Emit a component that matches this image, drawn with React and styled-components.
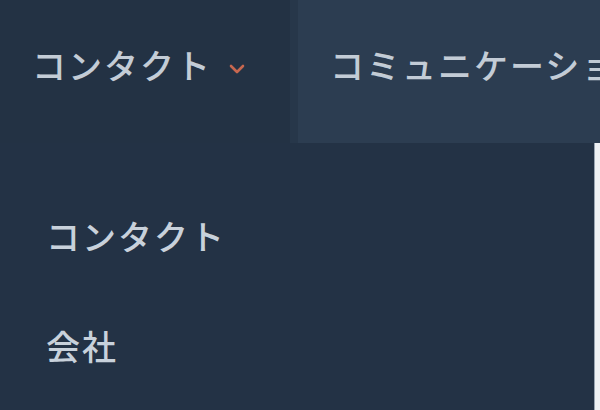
import React from "react";
import styled, { createGlobalStyle } from "styled-components";

const GlobalStyle = createGlobalStyle`
  html, body {
    margin: 0;
    padding: 0;
    background: #eef1f4;
    font-family: "Noto Sans CJK JP", "Noto Sans", sans-serif;
    overflow: hidden;
  }
`;

const StyledPage = styled.div`
  position: relative;
  width: 600px;
  height: 410px;
  overflow: hidden;
`;

const StyledNav = styled.nav`
  display: flex;
  flex-flow: row nowrap;
  width: 100%;
  height: 143px;
  background-color: #2c3d51;
`;

const StyledTab = styled.div`
  display: flex;
  flex-flow: row nowrap;
  align-items: center;
  flex-shrink: 0;
  box-sizing: border-box;
  height: 100%;
  padding: 0 ${props => (props.active ? "42px" : "0")} 14px ${props => (props.active ? "32px" : "32px")};
  background-color: ${props => (props.active ? "#233244" : "transparent")};
  border-left: ${props => (props.active ? "none" : "8px solid #27374a")};
  white-space: nowrap;
`;

const StyledTabLabel = styled.span`
  color: #c3ccd6;
  font-size: 34px;
  font-weight: 500;
  letter-spacing: 2px;
  line-height: 1;
`;

const StyledChevron = styled.svg`
  width: 22px;
  height: 14px;
  margin-left: 14px;
  margin-top: 8px;
`;

const StyledDropdown = styled.ul`
  position: absolute;
  top: 143px;
  left: 0;
  width: 595px;
  height: 267px;
  margin: 0;
  padding: 76px 0 0 46px;
  box-sizing: border-box;
  list-style: none;
  background-color: #233245;
  border-right: 1px solid #9aa6b3;
`;

const StyledItem = styled.li`
  height: 110px;
  color: #c8d1db;
  font-size: 34px;
  font-weight: 500;
  letter-spacing: 2px;
  line-height: 1;
`;

const Chevron = () => (
  <StyledChevron viewBox="0 0 22 14">
    <path d="M5 4 L11 10 L17 4" fill="none" stroke="#c7674f" strokeWidth="2.6" strokeLinecap="round" strokeLinejoin="round" />
  </StyledChevron>
);

const App = () => {
  return (
    <StyledPage>
      <GlobalStyle />
      <StyledNav>
        <StyledTab active>
          <StyledTabLabel>コンタクト</StyledTabLabel>
          <Chevron />
        </StyledTab>
        <StyledTab>
          <StyledTabLabel>コミュニケーション</StyledTabLabel>
        </StyledTab>
      </StyledNav>
      <StyledDropdown>
        <StyledItem>コンタクト</StyledItem>
        <StyledItem>会社</StyledItem>
      </StyledDropdown>
    </StyledPage>
  );
};

export default App;
